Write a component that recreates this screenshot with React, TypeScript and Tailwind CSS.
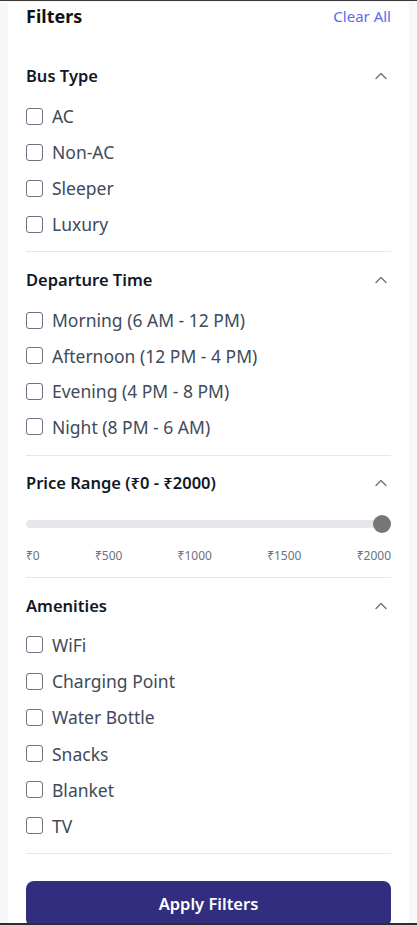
import React from "react";
import { ChevronUp } from "lucide-react";

const font = { fontFamily: '"Noto Sans", "Open Sans", sans-serif' };

function Check({ label }: { label: string }) {
  return (
    <label className="flex items-center h-6 gap-[9px]">
      <span className="w-[17px] h-[17px] rounded-[3px] border-[1.3px] border-[#6b7280] bg-white shrink-0" />
      <span className="text-[17.5px] text-[#414a59] leading-6">{label}</span>
    </label>
  );
}

function Header({ title, mb }: { title: string; mb: string }) {
  return (
    <div className={"flex items-center justify-between h-6 " + mb}>
      <span className="text-[16.5px] font-semibold text-[#111827] leading-6">{title}</span>
      <ChevronUp size={20} strokeWidth={1.6} className="text-[#6b7280]" />
    </div>
  );
}

export default function App() {
  return (
    <div style={font} className="w-[417px] h-[925px] bg-[#f7f8fa] border-t border-[#3a3a3a] border-b-2 border-b-[#2e2e2e] overflow-hidden">
      <div className="ml-2 w-[401px] h-full bg-white px-[18px] shadow-[0_0_2px_rgba(0,0,0,0.04)]">
        <div className="flex items-center justify-between h-7 mt-[1px] mb-[18px]">
          <span className="text-lg font-bold text-[#111] leading-7">Filters</span>
          <span className="text-[15px] text-[#6366f1]">Clear All</span>
        </div>

        <div className="pt-4 pb-[15px] border-b border-[#e5e7eb]">
          <Header title="Bus Type" mb="mb-4" />
          <div className="flex flex-col gap-3">
            {["AC", "Non-AC", "Sleeper", "Luxury"].map((i) => (
              <Check key={i} label={i} />
            ))}
          </div>
        </div>

        <div className="pt-4 pb-4 border-b border-[#e5e7eb]">
          <Header title="Departure Time" mb="mb-4" />
          <div className="flex flex-col gap-[11.67px]">
            {["Morning (6 AM - 12 PM)", "Afternoon (12 PM - 4 PM)", "Evening (4 PM - 8 PM)", "Night (8 PM - 6 AM)"].map((i) => (
              <Check key={i} label={i} />
            ))}
          </div>
        </div>

        <div className="pt-[15px] pb-[13px] border-b border-[#e5e7eb]">
          <Header title="Price Range (₹0 - ₹2000)" mb="" />
          <div className="relative mt-[19px] h-5 flex items-center">
            <div className="w-full h-2 rounded-full bg-[#e5e7eb]" />
            <div className="absolute right-0 top-[1px] w-[18px] h-[18px] rounded-full bg-[#767676]" />
          </div>
          <div className="flex justify-between mt-[14px] text-xs leading-4 text-[#6b7280]">
            <span>₹0</span>
            <span>₹500</span>
            <span>₹1000</span>
            <span>₹1500</span>
            <span>₹2000</span>
          </div>
        </div>

        <div className="pt-4 pb-[15px] border-b border-[#e5e7eb]">
          <Header title="Amenities" mb="mb-[15px]" />
          <div className="flex flex-col gap-[12.2px]">
            {["WiFi", "Charging Point", "Water Bottle", "Snacks", "Blanket", "TV"].map((i) => (
              <Check key={i} label={i} />
            ))}
          </div>
        </div>

        <button className="mt-[27px] w-full h-[46px] rounded-lg bg-[#332d80] text-white text-[16.5px] font-semibold">
          Apply Filters
        </button>
      </div>
    </div>
  );
}
